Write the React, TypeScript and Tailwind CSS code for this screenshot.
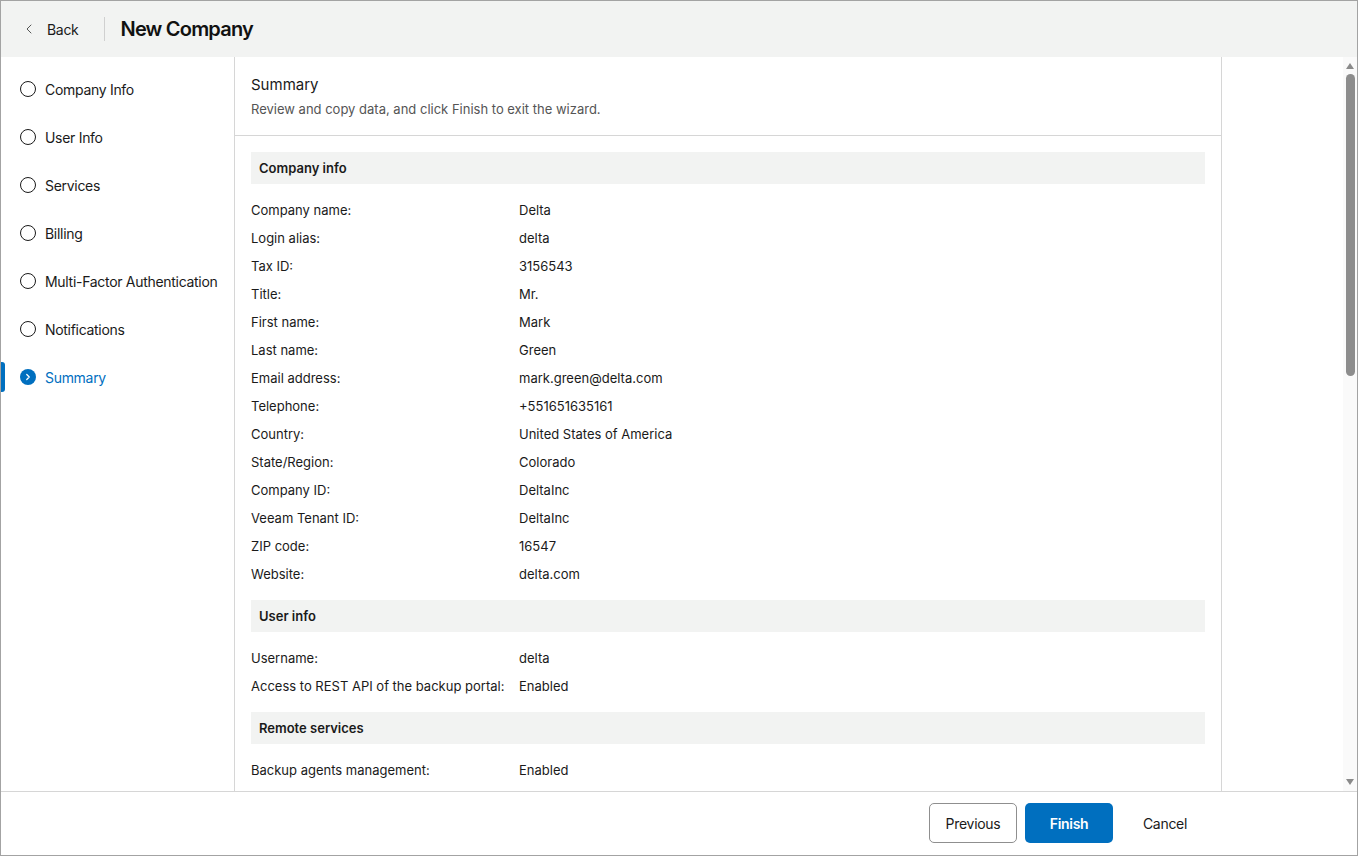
import { ChevronLeft, ChevronRight } from "lucide-react";

const steps = [
  "Company Info",
  "User Info",
  "Services",
  "Billing",
  "Multi-Factor Authentication",
  "Notifications",
  "Summary",
];

const sections: { title: string; rows: [string, string][] }[] = [
  {
    title: "Company info",
    rows: [
      ["Company name:", "Delta"],
      ["Login alias:", "delta"],
      ["Tax ID:", "3156543"],
      ["Title:", "Mr."],
      ["First name:", "Mark"],
      ["Last name:", "Green"],
      ["Email address:", "mark.green@delta.com"],
      ["Telephone:", "+551651635161"],
      ["Country:", "United States of America"],
      ["State/Region:", "Colorado"],
      ["Company ID:", "DeltaInc"],
      ["Veeam Tenant ID:", "DeltaInc"],
      ["ZIP code:", "16547"],
      ["Website:", "delta.com"],
    ],
  },
  {
    title: "User info",
    rows: [
      ["Username:", "delta"],
      ["Access to REST API of the backup portal:", "Enabled"],
    ],
  },
  {
    title: "Remote services",
    rows: [
      ["Backup agents management:", "Enabled"],
      ["Backup policies:", "Enabled"],
      ["Backup agent:", "Enabled"],
    ],
  },
];

export default function App() {
  const active = steps.length - 1;

  return (
    <div
      className="w-[1358px] h-[856px] flex flex-col border border-[#a3a3a3] bg-white text-[#1a1a1a] overflow-hidden"
      style={{ fontFamily: "Inter, 'Noto Sans', sans-serif" }}
    >
      {/* Header */}
      <div className="h-[56px] shrink-0 bg-[#f2f3f2] flex items-center">
        <div className="flex items-center pl-[20px] pr-[25px] text-[14px] tracking-[-0.3px] text-[#1a1a1a]">
          <ChevronLeft className="w-[16px] h-[16px] text-[#555] mr-[10px]" strokeWidth={1.5} />
          Back
        </div>
        <div className="w-px h-[24px] bg-[#d0d0d0]" />
        <h1 className="ml-[16px] text-[20px] font-semibold tracking-[-0.8px] text-[#111]">
          New Company
        </h1>
      </div>

      {/* Body */}
      <div className="flex flex-1 min-h-0">
        <nav className="w-[234px] shrink-0 border-r border-[#d6d6d6] pt-[8px]">
          {steps.map((s, i) => (
            <div key={s} className="relative h-[48px] flex items-center pl-[19px]">
              {i === active && (
                <span className="absolute left-0 top-[9px] w-[4px] h-[30px] rounded-r-[3px] bg-[#006fbf]" />
              )}
              {i === active ? (
                <span className="w-[16px] h-[16px] rounded-full bg-[#006fbf] flex items-center justify-center">
                  <ChevronRight className="w-[10px] h-[10px] text-white" strokeWidth={3} />
                </span>
              ) : (
                <span className="w-[16px] h-[16px] rounded-full border-[1.5px] border-[#1a1a1a]" />
              )}
              <span
                className={`ml-[9px] text-[14px] tracking-[-0.3px] ${
                  i === active ? "text-[#006fbf]" : "text-[#1a1a1a]"
                }`}
              >
                {s}
              </span>
            </div>
          ))}
        </nav>

        <main className="w-[987px] shrink-0 border-r border-[#d6d6d6] flex flex-col min-h-0">
          <div className="h-[79px] shrink-0 border-b border-[#d6d6d6] px-[16px] pt-[17px]">
            <div className="text-[15px] leading-[22px] text-[#1a1a1a]">Summary</div>
            <div className="mt-[4px] text-[13px] leading-[18px] text-[#555]">
              Review and copy data, and click Finish to exit the wizard.
            </div>
          </div>
          <div className="flex-1 min-h-0 overflow-hidden px-[16px] pt-[16px]">
            {sections.map((sec) => (
              <div key={sec.title} className="mb-[12px]">
                <div className="h-[32px] bg-[#f2f3f2] flex items-center pt-[2px] px-[8px] text-[13px] font-semibold text-[#1a1a1a]">
                  {sec.title}
                </div>
                <div className="mt-[12px]">
                  {sec.rows.map(([k, v]) => (
                    <div key={k} className="h-[28px] flex items-center pt-[2px] text-[13px] text-[#1a1a1a]">
                      <span className="w-[268px] whitespace-nowrap">{k}</span>
                      <span>{v}</span>
                    </div>
                  ))}
                </div>
              </div>
            ))}
          </div>
        </main>

        <div className="flex-1" />

        {/* Scrollbar */}
        <div className="w-[14px] shrink-0 bg-[#fafafa] flex flex-col items-center py-[4px]">
          <svg width="10" height="8" viewBox="0 0 10 8" className="mt-[1px]">
            <path d="M5 1 L9 7 L1 7 Z" fill="#8a8a8a" />
          </svg>
          <div className="mt-[4px] w-[9px] h-[302px] rounded-full bg-[#8d8d8d]" />
          <div className="flex-1" />
          <svg width="10" height="8" viewBox="0 0 10 8" className="mb-[1px]">
            <path d="M1 1 L9 1 L5 7 Z" fill="#8a8a8a" />
          </svg>
        </div>
      </div>

      {/* Footer */}
      <div className="h-[64px] shrink-0 border-t border-[#d6d6d6] flex items-start pt-[11px] justify-end pr-[148px] gap-[8px]">
        <button className="w-[88px] h-[40px] rounded-[5px] border border-[#8f8f8f] bg-white text-[14px] tracking-[-0.3px] text-[#1a1a1a]">
          Previous
        </button>
        <button className="w-[88px] h-[40px] rounded-[5px] bg-[#006fbf] text-[14px] tracking-[-0.3px] font-semibold text-white">
          Finish
        </button>
        <button className="w-[88px] h-[40px] text-[14px] tracking-[-0.3px] text-[#1a1a1a]">Cancel</button>
      </div>
    </div>
  );
}
